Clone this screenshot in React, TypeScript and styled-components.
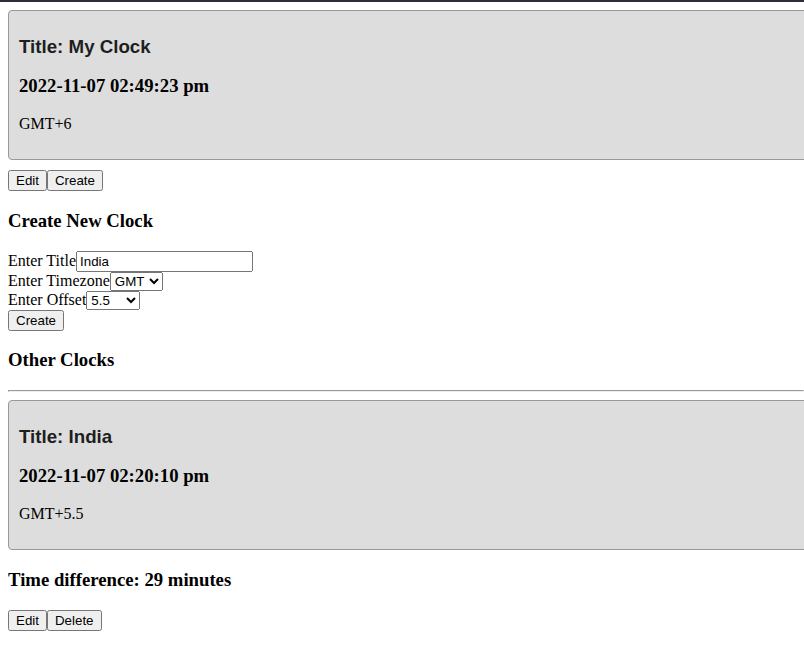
import * as React from "react";
import styled, { createGlobalStyle } from "styled-components";

const GlobalStyle = createGlobalStyle`
  html {
    overflow: hidden;
    border-top: 2px solid #2b2d3a;
  }
  body {
    margin: 8px 0 8px 8px;
    font-family: "Liberation Serif", "Times New Roman", serif;
    font-size: 16px;
    color: #000;
    background: #fff;
  }
`;

const ClockCard = styled.div`
  width: 100%;
  padding: 6px 10px 10px;
  margin-bottom: 10px;
  background: #dddddd;
  border: 1px solid #999999;
  border-radius: 4px;
`;

const ClockTitle = styled.h3`
  font-family: "Liberation Sans", Arial, sans-serif;
  font-size: 18.72px;
  line-height: 21px;
  color: #1e1e1e;
  margin: 18.72px 0;
`;

const ClockTime = styled.h3`
  font-size: 18.72px;
  line-height: 21px;
  margin: 18.72px 0;
`;

const Offset = styled.p`
  line-height: 18px;
  margin: 16px 0;
`;

const Heading = styled.h3`
  font-size: 18.72px;
  margin: 18.72px 0;
`;

const Button = styled.button`
  font-family: "Liberation Sans", Arial, sans-serif;
  font-size: 13.33px;
  height: 21px;
`;

const FormRow = styled.div`
  line-height: normal;
`;

const TextInput = styled.input`
  font-family: "Liberation Sans", Arial, sans-serif;
  font-size: 13.33px;
  box-sizing: border-box;
  width: 177px;
  height: 21px;
`;

const Select = styled.select<{ $width: number }>`
  font-family: "Liberation Sans", Arial, sans-serif;
  font-size: 13.33px;
  box-sizing: border-box;
  width: ${(p) => p.$width}px;
`;

const Divider = styled.hr`
  margin: 8px 0;
`;

type Clock = { title: string; time: string; offset: string };

const ClockView = ({ clock }: { clock: Clock }) => (
  <ClockCard>
    <ClockTitle>Title: {clock.title}</ClockTitle>
    <ClockTime>{clock.time}</ClockTime>
    <Offset>{clock.offset}</Offset>
  </ClockCard>
);

export default function App() {
  const [title, setTitle] = React.useState("India");
  const [zone, setZone] = React.useState("GMT");
  const [offset, setOffset] = React.useState("5.5");

  const mine: Clock = {
    title: "My Clock",
    time: "2022-11-07 02:49:23 pm",
    offset: "GMT+6",
  };
  const others: Clock[] = [
    { title: "India", time: "2022-11-07 02:20:10 pm", offset: "GMT+5.5" },
  ];

  return (
    <>
      <GlobalStyle />
      <div>
        <ClockView clock={mine} />
        <div>
          <Button>Edit</Button>
          <Button>Create</Button>
        </div>
      </div>

      <Heading>Create New Clock</Heading>
      <form onSubmit={(e) => e.preventDefault()}>
        <FormRow>
          Enter Title
          <TextInput value={title} onChange={(e) => setTitle(e.target.value)} />
        </FormRow>
        <FormRow>
          Enter Timezone
          <Select $width={53} value={zone} onChange={(e) => setZone(e.target.value)}>
            <option>GMT</option>
            <option>UTC</option>
          </Select>
        </FormRow>
        <FormRow>
          Enter Offset
          <Select $width={54} value={offset} onChange={(e) => setOffset(e.target.value)}>
            <option>5.5</option>
            <option>6</option>
            <option>-5</option>
          </Select>
        </FormRow>
        <Button type="submit">Create</Button>
      </form>

      <Heading>Other Clocks</Heading>
      <Divider />
      {others.map((clock) => (
        <div key={clock.title}>
          <ClockView clock={clock} />
          <Heading>Time difference: 29 minutes</Heading>
          <div>
            <Button>Edit</Button>
            <Button>Delete</Button>
          </div>
        </div>
      ))}
    </>
  );
}
